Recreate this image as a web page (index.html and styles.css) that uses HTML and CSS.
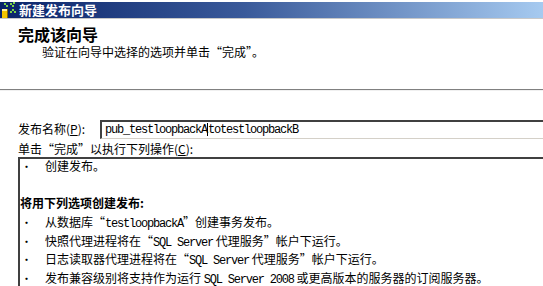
FILE: index.html
```html
<!DOCTYPE html>
<html lang="zh-CN">
<head>
    <meta charset="UTF-8">
    <title>新建发布向导</title>
    <link rel="stylesheet" href="styles.css">
</head>
<body>
    <div class="titlebar">
        <svg class="title-icon" width="16" height="16" viewBox="0 0 16 16">
            <rect x="1" y="7" width="6" height="9" fill="#f3c400"/>
            <rect x="1" y="7" width="6" height="2" fill="#fff3a0"/>
            <rect x="6" y="7" width="1" height="9" fill="#8a6a00"/>
            <path d="M3 1h2v2h-2zM5 3h2v2h-2zM9 1h2v2h-2zM11 3h2v2h-2zM12 0h2v2h-2zM9 9h2v2h-2zM11 7h2v2h-2zM13 9h2v2h-2z" fill="#7cd34a"/>
        </svg>
        <span class="title-text">新建发布向导</span>
    </div>
    <div class="header">
        <h1>完成该向导</h1>
        <p class="subtitle">验证在向导中选择的选项并单击“完成”。</p>
    </div>
    <div class="content">
        <div class="name-row">
            <label class="label name-label">发布名称(<u>P</u>):</label>
            <div class="textbox"><span class="mono">pub_testloopbackA</span><span class="caret"></span><span class="mono">totestloopbackB</span></div>
        </div>
        <div class="label action-label">单击“完成”以执行下列操作(<u>C</u>):</div>
        <div class="listbox">
            <div class="item"><span class="bullet">•</span>创建发布。</div>
            <div class="item"></div>
            <div class="item heading">将用下列选项创建发布:</div>
            <div class="item"><span class="bullet">•</span>从数据库“<span class="mono">testloopbackA</span>”创建事务发布。</div>
            <div class="item"><span class="bullet">•</span>快照代理进程将在“<span class="mono">SQL Server</span> 代理服务”帐户下运行。</div>
            <div class="item"><span class="bullet">•</span>日志读取器代理进程将在“<span class="mono">SQL Server</span> 代理服务”帐户下运行。</div>
            <div class="item"><span class="bullet">•</span>发布兼容级别将支持作为运行 <span class="mono">SQL Server 2008</span> 或更高版本的服务器的订阅服务器。</div>
        </div>
    </div>
</body>
</html>
```

FILE: styles.css
```css
body {
    margin: 0;
    background: #fff;
    font-family: "Noto Sans CJK SC", "DejaVu Sans", sans-serif;
    font-size: 12px;
    color: #000;
    overflow: hidden;
    height: 286px;
}

.titlebar {
    margin-top: 2px;
    height: 16px;
    display: flex;
    align-items: center;
    gap: 2px;
    padding-left: 1px;
    background: linear-gradient(90deg, #0a246a 0%, #3a5a9a 45%, #a6caf0 100%);
    border-bottom: 1px solid #c8c8c8;
}

.title-icon {
    flex: none;
}

.title-text {
    color: #fff;
    font-weight: bold;
    font-size: 13px;
    line-height: 16px;
}

.header {
    height: 70px;
    padding-left: 18px;
    border-bottom: 1px solid #808080;
    box-shadow: 0 1px 0 #f0f0f0;
}

h1 {
    margin: 0;
    padding-top: 6px;
    font-size: 16px;
    line-height: 19px;
    font-weight: bold;
}

.subtitle {
    margin: 0;
    padding-left: 24px;
    line-height: 15px;
}

.content {
    padding: 29px 0 0 18px;
}

.name-row {
    display: flex;
    align-items: center;
    height: 20px;
}

.label {
    line-height: 16px;
    white-space: nowrap;
}

.name-label {
    width: 82px;
    flex: none;
}

.textbox {
    flex: 1;
    height: 16px;
    line-height: 16px;
    padding-left: 3px;
    border-top: 2px solid #404040;
    border-left: 2px solid #404040;
    border-bottom: 1px solid #d4d0c8;
    white-space: nowrap;
    display: flex;
    align-items: center;
}

.mono {
    font-family: "Liberation Mono", "DejaVu Sans Mono", monospace;
    letter-spacing: -1.2px;
}

.caret {
    width: 1px;
    height: 13px;
    background: #000;
}

.action-label {
    margin-top: 2px;
}

.listbox {
    border-top: 2px solid #404040;
    border-left: 2px solid #404040;
}

.item {
    height: 18.7px;
    line-height: 14px;
    white-space: nowrap;
}

.item.heading {
    font-weight: bold;
}

.bullet {
    display: inline-block;
    width: 24px;
    padding-left: 1px;
    font-size: 11px;
}
```
